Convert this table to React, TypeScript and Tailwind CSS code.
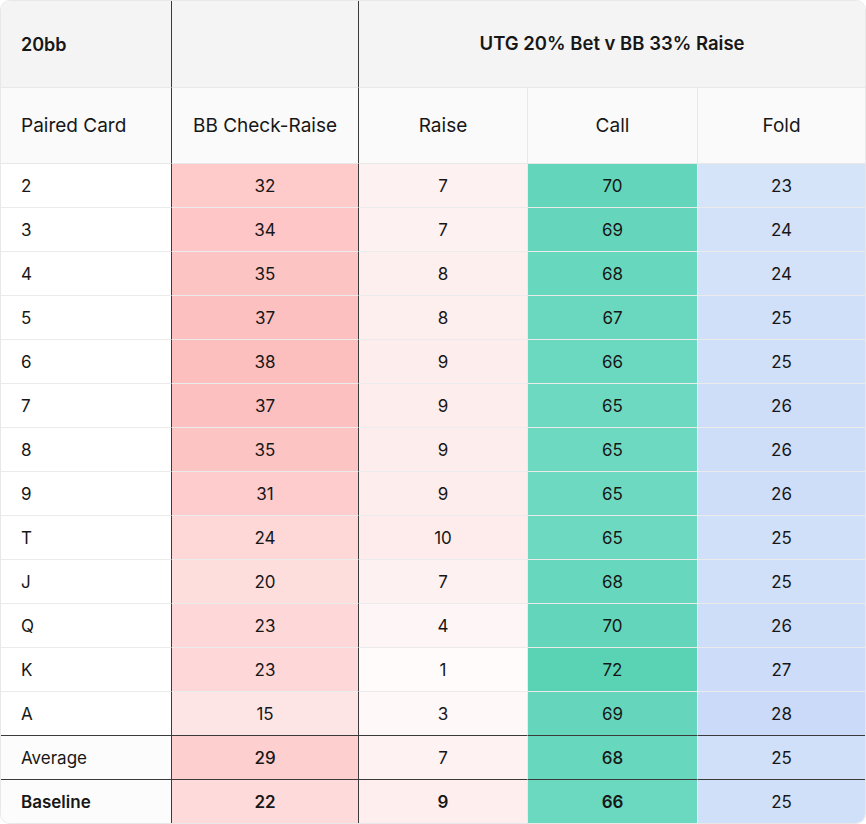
import React from "react";

type Row = {
  card: string;
  cr: [string, string];
  raise: [string, string];
  call: [string, string];
  fold: [string, string];
};

const rows: Row[] = [
  { card: "2", cr: ["32", "bg-[#fecaca]"], raise: ["7", "bg-[#fef1f1]"], call: ["70", "bg-[#62d5ba]"], fold: ["23", "bg-[#d6e4fa]"] },
  { card: "3", cr: ["34", "bg-[#fec6c6]"], raise: ["7", "bg-[#fef1f1]"], call: ["69", "bg-[#65d6bc]"], fold: ["24", "bg-[#d4e2f9]"] },
  { card: "4", cr: ["35", "bg-[#fdc4c4]"], raise: ["8", "bg-[#feefef]"], call: ["68", "bg-[#67d7bd]"], fold: ["24", "bg-[#d4e2f9]"] },
  { card: "5", cr: ["37", "bg-[#fdc0c0]"], raise: ["8", "bg-[#feefef]"], call: ["67", "bg-[#6ad8bf]"], fold: ["25", "bg-[#d1e0f9]"] },
  { card: "6", cr: ["38", "bg-[#fdbebe]"], raise: ["9", "bg-[#feeded]"], call: ["66", "bg-[#6bd8c0]"], fold: ["25", "bg-[#d1e0f9]"] },
  { card: "7", cr: ["37", "bg-[#fdc0c0]"], raise: ["9", "bg-[#feeded]"], call: ["65", "bg-[#6ed9c1]"], fold: ["26", "bg-[#cfdef8]"] },
  { card: "8", cr: ["35", "bg-[#fdc4c4]"], raise: ["9", "bg-[#feeded]"], call: ["65", "bg-[#6ed9c1]"], fold: ["26", "bg-[#cfdef8]"] },
  { card: "9", cr: ["31", "bg-[#fecccc]"], raise: ["9", "bg-[#feeded]"], call: ["65", "bg-[#6ed9c1]"], fold: ["26", "bg-[#cfdef8]"] },
  { card: "T", cr: ["24", "bg-[#fed7d7]"], raise: ["10", "bg-[#feebeb]"], call: ["65", "bg-[#6ed9c1]"], fold: ["25", "bg-[#d1e0f9]"] },
  { card: "J", cr: ["20", "bg-[#fedddd]"], raise: ["7", "bg-[#fef1f1]"], call: ["68", "bg-[#67d7bd]"], fold: ["25", "bg-[#d1e0f9]"] },
  { card: "Q", cr: ["23", "bg-[#fed8d8]"], raise: ["4", "bg-[#fef6f6]"], call: ["70", "bg-[#62d5ba]"], fold: ["26", "bg-[#cfdef8]"] },
  { card: "K", cr: ["23", "bg-[#fed8d8]"], raise: ["1", "bg-[#fffbfb]"], call: ["72", "bg-[#5ad3b5]"], fold: ["27", "bg-[#cddcf8]"] },
  { card: "A", cr: ["15", "bg-[#fee5e5]"], raise: ["3", "bg-[#fef8f8]"], call: ["69", "bg-[#65d6bc]"], fold: ["28", "bg-[#cbdaf8]"] },
];

// weights per column: label, check-raise, raise, call, fold
const summary: (Row & { w: string[] })[] = [
  {
    card: "Average",
    w: ["", "font-medium", "", "font-medium", ""],
    cr: ["29", "bg-[#fdcfcf]"],
    raise: ["7", "bg-[#fef2f2]"],
    call: ["68", "bg-[#67d7bd]"],
    fold: ["25", "bg-[#d1e0f9]"],
  },
  {
    card: "Baseline",
    w: ["font-semibold", "font-semibold", "font-semibold", "font-semibold", ""],
    cr: ["22", "bg-[#fedada]"],
    raise: ["9", "bg-[#feeeee]"],
    call: ["66", "bg-[#6bd8c0]"],
    fold: ["25", "bg-[#d1e0f9]"],
  },
];

const cell = "flex items-center justify-center pt-0.5";

export default function App() {
  return (
    <div className="w-[866px] h-[824px] bg-white font-['Inter',sans-serif] text-[#171717]">
      <div className="h-full rounded-[10px] border border-[#e8e8e8] overflow-hidden grid grid-cols-[171px_187px_169px_170px_1fr] grid-rows-[87px_76px_repeat(14,44px)_1fr]">
        {/* top header */}
        <div className="bg-[#f4f4f4] border-b border-[#e8e8e8] border-r border-r-[#3a3a3a] flex items-center pl-5 text-[18px] font-semibold">
          20bb
        </div>
        <div className="bg-[#f4f4f4] border-b border-[#e8e8e8] border-r border-r-[#3a3a3a]" />
        <div className="flex items-center justify-center col-span-3 bg-[#f4f4f4] border-b border-[#e8e8e8] text-[18.5px] font-semibold">
          UTG 20% Bet v BB 33% Raise
        </div>

        {/* column header */}
        <div className="bg-[#fafafa] border-b border-[#e8e8e8] border-r border-r-[#3a3a3a] flex items-center pl-5 pt-0.5 text-[19px]">
          Paired Card
        </div>
        <div className={`${cell} bg-[#fafafa] border-b border-[#e8e8e8] border-r border-r-[#3a3a3a] text-[19px]`}>
          BB Check-Raise
        </div>
        <div className={`${cell} bg-[#fafafa] border-b border-r border-[#e8e8e8] text-[19px]`}>Raise</div>
        <div className={`${cell} bg-[#fafafa] border-b border-r border-[#e8e8e8] text-[19px]`}>Call</div>
        <div className={`${cell} bg-[#fafafa] border-b border-[#e8e8e8] text-[19px]`}>Fold</div>

        {rows.map((r, i) => {
          const last = i === rows.length - 1;
          const bottom = last ? "border-b border-b-[#3a3a3a]" : "border-b border-b-[#ebebeb]";
          return (
            <React.Fragment key={r.card}>
              <div className={`${bottom} border-r border-r-[#3a3a3a] flex items-center pl-5 pt-0.5 text-[17px]`}>{r.card}</div>
              <div className={`${cell} ${r.cr[1]} ${bottom} border-r border-r-[#3a3a3a] text-[17px]`}>{r.cr[0]}</div>
              <div className={`${cell} ${r.raise[1]} ${bottom} border-r border-r-[#ebebeb] text-[17px]`}>{r.raise[0]}</div>
              <div className={`${cell} ${r.call[1]} ${bottom} border-r border-r-[#ebebeb] text-[17px]`}>{r.call[0]}</div>
              <div className={`${cell} ${r.fold[1]} ${bottom} text-[17px]`}>{r.fold[0]}</div>
            </React.Fragment>
          );
        })}

        {summary.map((r, i) => {
          const bottom = i === 0 ? "border-b border-b-[#3a3a3a]" : "";
          return (
            <React.Fragment key={r.card}>
              <div className={`${bottom} bg-[#fcfcfc] border-r border-r-[#3a3a3a] flex items-center pl-5 pt-0.5 text-[17px] ${r.w[0]}`}>
                {r.card}
              </div>
              <div className={`${cell} ${r.cr[1]} ${bottom} border-r border-r-[#3a3a3a] text-[17px] ${r.w[1]}`}>{r.cr[0]}</div>
              <div className={`${cell} ${r.raise[1]} ${bottom} border-r border-r-[#ebebeb] text-[17px] ${r.w[2]}`}>{r.raise[0]}</div>
              <div className={`${cell} ${r.call[1]} ${bottom} border-r border-r-[#ebebeb] text-[17px] ${r.w[3]}`}>{r.call[0]}</div>
              <div className={`${cell} ${r.fold[1]} ${bottom} text-[17px] ${r.w[4]}`}>{r.fold[0]}</div>
            </React.Fragment>
          );
        })}
      </div>
    </div>
  );
}
